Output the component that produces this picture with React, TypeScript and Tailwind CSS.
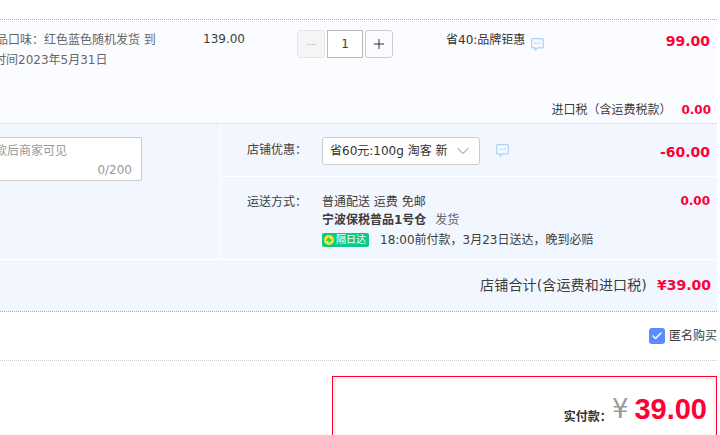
import React from 'react';
import { Check, ChevronDown, Minus, Plus, Zap } from 'lucide-react';

const font = "font-['DejaVu_Sans','Noto_Sans_CJK_SC',sans-serif]";

const MessageIcon = () => (
  <svg width="13" height="13" viewBox="0 0 13 13" fill="none" className="shrink-0">
    <path d="M1.300.7h10.400a.6.6 0 0 1 .6.6v7.900a.6.6 0 0 1-.6.6H6.800l-2.600 2.400V9.800H1.300a.6.6 0 0 1-.6-.6V1.300a.6.6 0 0 1 .6-.6z" stroke="#a9d3f7" strokeWidth="1.200" fill="#f5faff" />
    <path d="M3.500 5.200h1.400M5.800 5.200h1.400M8.100 5.200h1.400" stroke="#a9d3f7" strokeWidth="1.200" />
  </svg>
);

export default function App() {
  return (
    <div className={`${font} w-[720px] h-[435px] overflow-hidden bg-white text-[12px] text-[#3c3c3c]`}>
      <div className="w-[717px]">
        <div className="h-[20px] border-b border-dotted border-[#80b2ff]" />

        {/* order item */}
        <div className="h-[104px] bg-[#fbfcff] border-b border-dotted border-[#ccc] flex flex-col">
          <div className="flex flex-1 pt-[10px]">
            <div className="w-[203px] shrink-0 overflow-hidden leading-[20px] text-[#666]">
              <div className="ml-[-16px] h-[20px] whitespace-nowrap">商品口味：红色蓝色随机发货 到</div>
              <div className="ml-[-6px] h-[20px] whitespace-nowrap">时间2023年5月31日</div>
            </div>
            <div className="w-[94px] shrink-0 leading-[20px] -mt-px">139.00</div>
            <div className="w-[149px] shrink-0 flex gap-[2px] h-[28px]">
              <div className="w-[28px] h-[28px] rounded-[3px] border border-[#e6e6e6] bg-[#f5f5f5] flex items-center justify-center text-[#ccc]">
                <Minus size={15} strokeWidth={1.5} />
              </div>
              <div className="w-[36px] h-[28px] border border-[#bbb] flex items-center justify-center bg-white">1</div>
              <div className="w-[28px] h-[28px] rounded-[3px] border border-[#ccc] flex items-center justify-center text-[#333]">
                <Plus size={16} strokeWidth={1.5} />
              </div>
            </div>
            <div className="flex-1 flex items-start gap-[6px] leading-[20px] whitespace-nowrap text-[#333]">
              <span>省40:品牌钜惠</span>
              <span className="pt-[8px]"><MessageIcon /></span>
            </div>
            <div className="pr-[7px] pt-[1px] text-[14px] leading-[20px] font-bold text-[#ff0036]">99.00</div>
          </div>
          <div className="flex justify-end items-center gap-[10px] pr-[6px] pb-[3px] leading-[20px]">
            <span>进口税（含运费税款）</span>
            <span className="font-bold text-[#ff0036]">0.00</span>
          </div>
        </div>

        {/* shop options */}
        <div className="h-[136px] bg-[#f2f7ff] flex border-b border-[#fff]">
          <div className="w-[221px] shrink-0 border-r border-white overflow-hidden pt-[13px]">
            <div className="ml-[-25px] w-[167px] h-[44px] bg-white border border-[#ccc] rounded-[2px] relative overflow-hidden">
              <div className="pl-[7px] pt-[4px] leading-[18px] text-[#999] whitespace-nowrap">付款后商家可见</div>
              <div className="absolute right-[9px] bottom-[1px] leading-[18px] text-[#999]">0/200</div>
            </div>
          </div>
          <div className="flex-1 flex flex-col">
            <div className="h-[53px] border-b border-white flex items-start pt-[13px] pl-[26px]">
              <div className="w-[75px] leading-[26px] shrink-0">店铺优惠：</div>
              <div className="w-[158px] h-[28px] bg-white border border-[#ccc] rounded-[3px] flex items-center pl-[7px] justify-between pr-[6px] text-[#333] whitespace-nowrap">
                <span>省60元:100g 淘客 新</span>
                <ChevronDown size={20} strokeWidth={1} className="text-[#666]" />
              </div>
              <div className="ml-[16px] pt-[7px]"><MessageIcon /></div>
              <div className="ml-auto pr-[7px] pt-[3px] text-[14px] leading-[24px] font-bold text-[#ff0036]">-60.00</div>
            </div>
            <div className="flex-1 flex items-start pt-[16px] pl-[26px] leading-[18px]">
              <div className="w-[75px] shrink-0">运送方式：</div>
              <div className="flex flex-col">
                <div>普通配送 运费 免邮</div>
                <div><span className="font-bold">宁波保税普品1号仓</span><span className="ml-[9px] text-[#666]">发货</span></div>
                <div className="flex items-center mt-[2px] whitespace-nowrap">
                  <span className="w-[47px] h-[14px] rounded-[2px] bg-[#0cc98a] text-white text-[10px] leading-[14px] flex items-center pl-[2px] gap-[2px]">
                    <span className="w-[10px] h-[10px] rounded-full bg-[#ffe81a] flex items-center justify-center text-[#0cc98a]">
                      <Zap size={8} fill="currentColor" strokeWidth={0} />
                    </span>
                    隔日达
                  </span>
                  <span className="ml-[11px]">18:00前付款，3月23日送达，晚到必赔</span>
                </div>
              </div>
              <div className="ml-auto pr-[7px] -mt-px text-[12px] leading-[18px] font-bold text-[#ff0036]">0.00</div>
            </div>
          </div>
        </div>

        {/* shop total */}
        <div className="h-[52px] bg-[#f2f7ff] border-b border-dotted border-[#80b2ff] flex items-center justify-end gap-[10px] pr-[6px]">
          <span className="text-[14px] tracking-[0.15px]">店铺合计(含运费和进口税)</span>
          <span className="text-[14px] font-bold text-[#ff0036]">¥39.00</span>
        </div>

        {/* anonymous */}
        <div className="h-[49px] border-b border-dotted border-[#ccc] flex items-center justify-end overflow-hidden pb-[1px]">
          <span className="w-[16px] h-[16px] rounded-[3px] bg-[#5b8cff] flex items-center justify-center text-white shrink-0">
            <Check size={12} strokeWidth={3} />
          </span>
          <span className="ml-[4px] whitespace-nowrap">匿名购买</span>
        </div>

        {/* pay box */}
        <div className="mt-[15px] ml-[332px] h-[80px] border border-[#ff0036] border-b-0 bg-[#fff0e8] px-[3px] pt-[3px]">
          <div className="h-full bg-white flex items-start justify-end pr-[6px] pt-[13px]">
            <span className="text-[12px] font-bold text-[#333] mt-[15px]">实付款：</span>
            <span className="text-[26px] leading-[32px] text-[#999] mr-[6px]">¥</span>
            <span className="text-[29px] leading-[32px] font-bold text-[#ff0036] font-['Liberation_Sans','Noto_Sans_CJK_SC',sans-serif]">39.00</span>
          </div>
        </div>
      </div>
    </div>
  );
}
